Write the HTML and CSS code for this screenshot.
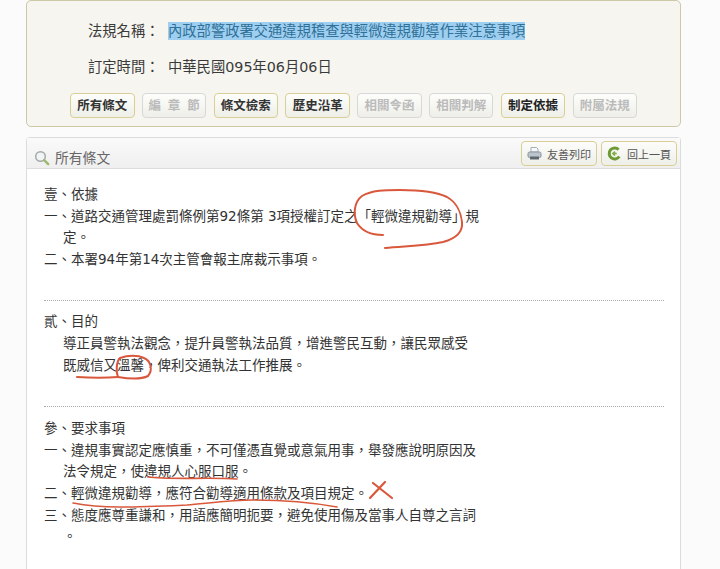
FILE: index.html
```html
<!DOCTYPE html>
<html lang="zh-Hant">
<head>
<meta charset="utf-8">
<title>所有條文</title>
<link rel="stylesheet" href="styles.css">
</head>
<body>
<main class="page">
  <section class="info">
    <div class="info-row"><span class="info-label">法規名稱：</span><span class="selected">內政部警政署交通違規稽查與輕微違規勸導作業注意事項</span></div>
    <div class="info-row"><span class="info-label">訂定時間：</span><span>中華民國095年06月06日</span></div>
    <nav class="tabs">
      <a class="tab">所有條文</a>
      <a class="tab off">編 章 節</a>
      <a class="tab">條文檢索</a>
      <a class="tab">歷史沿革</a>
      <a class="tab off">相關令函</a>
      <a class="tab off">相關判解</a>
      <a class="tab strong">制定依據</a>
      <a class="tab off">附屬法規</a>
    </nav>
  </section>
  <section class="law">
    <header class="law-head">
      <h1 class="law-title">
        <svg class="icon" width="16" height="16" viewBox="0 0 16 16"><circle cx="6.5" cy="6.5" r="4.8" fill="#f1f4f4" stroke="#a3a8a8" stroke-width="1.5"/><path d="M10.2 10.2l4 4" stroke="#9db873" stroke-width="2.4" stroke-linecap="round"/></svg>
        所有條文
      </h1>
      <div class="tools">
        <a class="tool"><svg class="icon" width="15" height="15" viewBox="0 0 15 15"><path d="M4 6V1.5h5.5L11 3v3z" fill="#f7f8f9" stroke="#a5aeb6"/><rect x="1" y="6" width="13" height="5.5" rx="1.5" fill="#bcc5cc" stroke="#8b959e"/><rect x="3" y="10.5" width="9" height="3" fill="#5f6870"/></svg>友善列印</a>
        <a class="tool"><svg class="icon" width="15" height="15" viewBox="0 0 15 15"><path d="M11.6 3.6A5.5 5.5 0 1 0 12.3 10.5" fill="none" stroke="#6d9a33" stroke-width="3"/><path d="M9.8 7.6H6.4M8 5.6L5.8 7.6 8 9.6" fill="none" stroke="#83ad47" stroke-width="1.5"/></svg>回上一頁</a>
      </div>
    </header>
    <div class="law-body">
      <article class="chapter">
        <p>壹、依據</p>
        <p class="item">一、道路交通管理處罰條例第92條第 3項授權訂定之「輕微違規勸導」規<br>定。</p>
        <p>二、本署94年第14次主管會報主席裁示事項。</p>
      </article>
      <article class="chapter">
        <p>貳、目的</p>
        <p class="para">導正員警執法觀念，提升員警執法品質，增進警民互動，讓民眾感受<br>既威信又溫馨，俾利交通執法工作推展。</p>
      </article>
      <article class="chapter last">
        <p>參、要求事項</p>
        <p class="item">一、違規事實認定應慎重，不可僅憑直覺或意氣用事，舉發應說明原因及<br>法令規定，使違規人心服口服。</p>
        <p>二、輕微違規勸導，應符合勸導適用條款及項目規定。</p>
        <p class="item">三、態度應尊重謙和，用語應簡明扼要，避免使用傷及當事人自尊之言詞<br>。</p>
      </article>
    </div>
  </section>
</main>
<svg class="ink" width="720" height="569" viewBox="0 0 720 569" aria-hidden="true">
  <g fill="none" stroke="#d9583c" stroke-width="2" stroke-linecap="round" stroke-linejoin="round">
    <path d="M383 235C372 235 362 231 357 223C353 214 354 202 362 196C372 190 385 190 400 190C415 190 435 191 447 197C456 202 461 212 462 222C463 232 457 238 443 242C425 246 405 246 385 248"/>
    <path d="M77 377C92 378 106 378 118 377"/>
    <path d="M118 377C116 372 116 362 120 358C128 355 138 355 144 358C151 361 153 370 148 376C142 379 130 379 118 377"/>
    <path d="M148 477C170 480 210 477 237 479" stroke-width="1.6"/>
    <path d="M73 503C88 506 104 507 120 507C145 507 165 506 187 505C210 503 232 500 253 500C285 500 315 503 337 507" stroke-width="1.6"/>
    <path d="M370 498L385 482M373 483L392 498" stroke-width="2.2"/>
  </g>
</svg>
</body>
</html>
```
FILE: styles.css
```css
html, body { margin: 0; height: 100%; overflow: hidden; }
body {
  background: #fbfbfb;
  color: #333;
  font-family: "DejaVu Sans", "Noto Sans CJK SC", "Noto Sans CJK TC", sans-serif;
  font-size: 13.5px;
  position: relative;
}
.page { width: 655px; margin-left: 26px; display: flex; flex-direction: column; gap: 10px; }
.info {
  box-sizing: border-box;
  height: 127px;
  background: #f6f5ef;
  border: 1px solid #cfc8a4;
  border-radius: 5px;
  padding: 21px 0 0 61px;
  display: flex;
  flex-direction: column;
}
.info-row { display: flex; height: 18px; line-height: 18px; margin-bottom: 18px; font-size: 14.3px; color: #3a3a3a; white-space: nowrap; }
.info-label { width: 80px; }
.selected { background: #9fcff0; color: #2f7198; }
.tabs { display: flex; gap: 7.3px; margin: -1px 0 0 -18px; }
.tab {
  box-sizing: border-box;
  width: 64.5px;
  height: 25px;
  line-height: 23px;
  text-align: center;
  font-size: 12.5px;
  font-weight: 700;
  word-spacing: 2.5px;
  color: #333;
  background: linear-gradient(#fdfdfb, #efefe9);
  border: 1px solid #d9cf94;
  border-radius: 4px;
  white-space: nowrap;
}
.tab.off { color: #bbb; border-color: #d8d8d8; }
.tab.strong { color: #222; }
.law {
  box-sizing: border-box;
  height: 440px;
  background: #fff;
  border: 1px solid #dcdcdc;
  border-bottom: 0;
  border-radius: 4px 4px 0 0;
}
.law-head {
  box-sizing: border-box;
  height: 31px;
  border-bottom: 1px solid #dcdcdc;
  background: linear-gradient(#fafafa, #efefef);
  display: flex;
  justify-content: space-between;
  align-items: flex-start;
  padding: 3px 3px 0 7px;
}
.law-title { margin: 8px 0 0; font-size: 13.8px; line-height: 18px; font-weight: 400; color: #666; display: flex; align-items: center; gap: 5px; }
.tools { display: flex; gap: 4px; }
.tool {
  box-sizing: border-box;
  height: 25px;
  width: 76px;
  display: flex;
  align-items: center;
  justify-content: center;
  gap: 5px;
  font-size: 11px;
  color: #555;
  background: linear-gradient(#fcfcfa, #efefe9);
  border: 1px solid #d9cf94;
  border-radius: 4px;
  white-space: nowrap;
}
.icon { flex: none; }
.law-body { padding: 15px 0 0 17px; }
.chapter { width: 620px; padding-bottom: 30px; border-bottom: 1px dotted #aaa; margin-bottom: 10px; }
.chapter.last { border-bottom: 0; margin-top: 11px; }
.chapter p { margin: 0; line-height: 21.6px; white-space: nowrap; }
.item { padding-left: 19px; text-indent: -19px; }
.para { padding-left: 19px; }
.ink { position: absolute; left: 0; top: 0; pointer-events: none; }
```
